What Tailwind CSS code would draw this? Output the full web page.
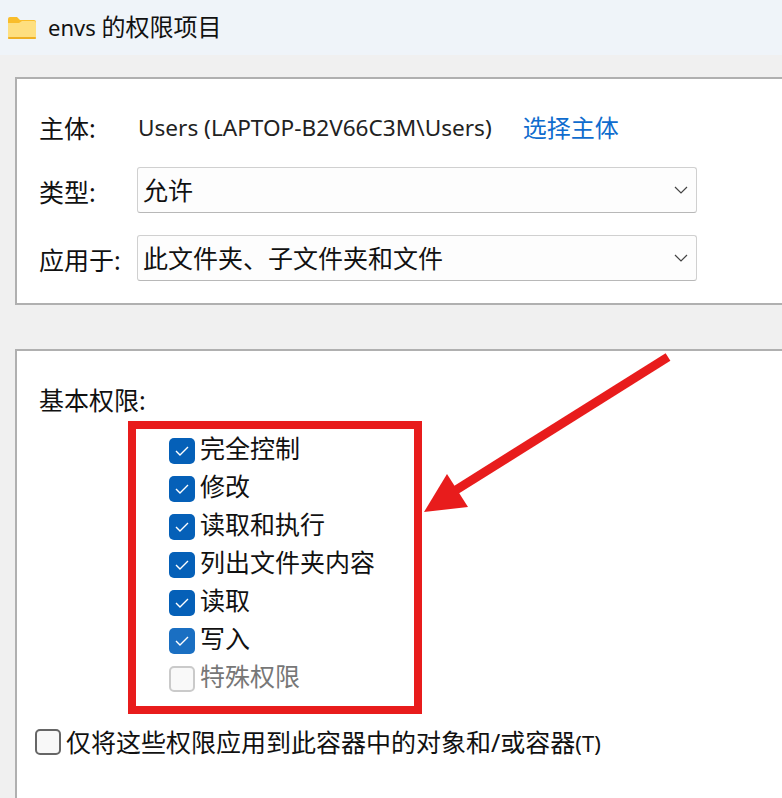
<!DOCTYPE html>
<html lang="zh-CN">
<head>
    <meta charset="UTF-8">
    <title>envs 的权限项目</title>
    <script src="https://cdn.jsdelivr.net/npm/@tailwindcss/browser@4"></script>
</head>
<body>
    <div class="relative w-[782px] h-[798px] overflow-hidden bg-[#f0f0f0] text-[25px] leading-[38px] text-[#111] font-['Noto_Sans','Noto_Sans_CJK_SC',sans-serif]">
        <!-- Title bar -->
        <div class="flex items-center h-[55px] bg-[#eff4f9] pl-[8px]">
            <svg class="w-[28px] h-[22px]" viewBox="0 0 28 22">
                <path d="M0 2a2 2 0 0 1 2-2h7l3 3h14a2 2 0 0 1 2 2v15a2 2 0 0 1-2 2H2a2 2 0 0 1-2-2z" fill="#f9bd2b"/>
                <path d="M0 6h11l3-2h12a2 2 0 0 1 2 2v14a2 2 0 0 1-2 2H2a2 2 0 0 1-2-2z" fill="#fedf80"/>
                <rect x="0" y="20" width="28" height="2" rx="1" fill="#eeb026"/>
            </svg>
            <span class="ml-[12px] text-[24px] pb-[2px]"><span class="text-[22px]">envs </span>的权限项目</span>
        </div>

        <!-- Owner, type, applies to -->
        <div class="mt-[22px] ml-[15px] h-[228px] border-y-2 border-l-2 border-[#b0b0b0] bg-white pl-[22px] pt-[30px]">
            <div class="flex items-center h-[38px]">
                <span class="w-[99px]">主体:</span>
                <span class="text-[22.6px] text-[#222]">Users (LAPTOP-B2V66C3M\Users)</span>
                <span class="ml-[31px] text-[24px] text-[#0f6cce]">选择主体</span>
            </div>
            <div class="flex items-center mt-[20px] h-[46px]">
                <span class="w-[98px] pt-[4px]">类型:</span>
                <div class="flex items-center justify-between w-[560px] h-[46px] pl-[5px] pr-[8px] bg-[#fdfdfd] border border-[#d0d0d0] border-b-[#b8b8b8] rounded-[3px]">
                    <span>允许</span>
                    <svg class="w-[14px] h-[8px]" viewBox="0 0 14 8" fill="none" stroke="#444" stroke-width="1.2"><path d="M1 1l6 6 6-6"/></svg>
                </div>
            </div>
            <div class="flex items-center mt-[22px] h-[46px]">
                <span class="w-[98px] pt-[4px]">应用于:</span>
                <div class="flex items-center justify-between w-[560px] h-[46px] pl-[5px] pr-[8px] bg-[#fdfdfd] border border-[#d0d0d0] border-b-[#b8b8b8] rounded-[3px]">
                    <span>此文件夹、子文件夹和文件</span>
                    <svg class="w-[14px] h-[8px]" viewBox="0 0 14 8" fill="none" stroke="#444" stroke-width="1.2"><path d="M1 1l6 6 6-6"/></svg>
                </div>
            </div>
        </div>

        <!-- Basic permissions -->
        <div class="mt-[44px] ml-[15px] h-[460px] border-t-2 border-l-2 border-[#b0b0b0] bg-white pt-[30px] pl-[22px]">
            <div class="h-[38px]">基本权限:</div>
            <div class="mt-[2px] ml-[89px] w-[294px] h-[293px] border-[8px] border-[#e81c1c] pl-[33px] pt-[3px]">
                <div class="flex items-center h-[38px] gap-[5px]">
                    <span class="flex items-center justify-center w-[26px] h-[26px] rounded-[5px] bg-[#0560b8]"><svg class="w-[14px] h-[10px]" viewBox="0 0 14 10" fill="none" stroke="#fff" stroke-width="1.4"><path d="M1 5l4 4 8-8"/></svg></span>
                    <span class="pb-[6px]">完全控制</span>
                </div>
                <div class="flex items-center h-[38px] gap-[5px]">
                    <span class="flex items-center justify-center w-[26px] h-[26px] rounded-[5px] bg-[#0560b8]"><svg class="w-[14px] h-[10px]" viewBox="0 0 14 10" fill="none" stroke="#fff" stroke-width="1.4"><path d="M1 5l4 4 8-8"/></svg></span>
                    <span class="pb-[6px]">修改</span>
                </div>
                <div class="flex items-center h-[38px] gap-[5px]">
                    <span class="flex items-center justify-center w-[26px] h-[26px] rounded-[5px] bg-[#0560b8]"><svg class="w-[14px] h-[10px]" viewBox="0 0 14 10" fill="none" stroke="#fff" stroke-width="1.4"><path d="M1 5l4 4 8-8"/></svg></span>
                    <span class="pb-[6px]">读取和执行</span>
                </div>
                <div class="flex items-center h-[38px] gap-[5px]">
                    <span class="flex items-center justify-center w-[26px] h-[26px] rounded-[5px] bg-[#0560b8]"><svg class="w-[14px] h-[10px]" viewBox="0 0 14 10" fill="none" stroke="#fff" stroke-width="1.4"><path d="M1 5l4 4 8-8"/></svg></span>
                    <span class="pb-[6px]">列出文件夹内容</span>
                </div>
                <div class="flex items-center h-[38px] gap-[5px]">
                    <span class="flex items-center justify-center w-[26px] h-[26px] rounded-[5px] bg-[#0560b8]"><svg class="w-[14px] h-[10px]" viewBox="0 0 14 10" fill="none" stroke="#fff" stroke-width="1.4"><path d="M1 5l4 4 8-8"/></svg></span>
                    <span class="pb-[6px]">读取</span>
                </div>
                <div class="flex items-center h-[38px] gap-[5px]">
                    <span class="flex items-center justify-center w-[26px] h-[26px] rounded-[5px] bg-[#1a6fc2]"><svg class="w-[14px] h-[10px]" viewBox="0 0 14 10" fill="none" stroke="#fff" stroke-width="1.4"><path d="M1 5l4 4 8-8"/></svg></span>
                    <span class="pb-[6px]">写入</span>
                </div>
                <div class="flex items-center h-[38px] gap-[5px]">
                    <span class="w-[26px] h-[26px] rounded-[5px] bg-[#f9f9f9] border-2 border-[#cacaca]"></span>
                    <span class="pb-[6px] text-[#777]">特殊权限</span>
                </div>
            </div>
            <div class="flex items-center h-[38px] mt-[9px] -ml-[4px] gap-[5px]">
                <span class="w-[26px] h-[26px] rounded-[5px] bg-[#f8f8f8] border-2 border-[#666]"></span>
                <span>仅将这些权限应用到此容器中的对象和/或容器<span class="text-[22px]">(T)</span></span>
            </div>
        </div>

        <!-- Annotation arrow -->
        <svg class="absolute left-0 top-0 w-[782px] h-[798px] pointer-events-none" viewBox="0 0 782 798">
            <path d="M668 357L456 490" stroke="#e81c1c" stroke-width="9" fill="none"/>
            <path d="M424 512L447 474L468 507z" fill="#e81c1c"/>
        </svg>
    </div>
</body>
</html>
